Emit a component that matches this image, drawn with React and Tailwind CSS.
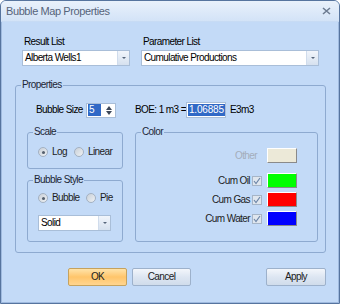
import React from 'react'

const Combo = ({ value, className }) => (
  <div className={`flex h-[16px] bg-white border border-[#a9bed8] ${className}`}>
    <div className="flex-1 flex items-center pl-[2px] text-black whitespace-nowrap overflow-hidden">{value}</div>
    <div className="w-[12px] flex items-center justify-center bg-gradient-to-b from-[#f1f5fb] to-[#d6e1ef] border-l border-[#d0dcec]">
      <span className="block w-0 h-0 border-x-[2px] border-x-transparent border-t-[2px] border-t-[#56657a]" />
    </div>
  </div>
)

const Group = ({ label, className, children }) => (
  <div className={`relative border border-[#8eaad0] rounded-[3px] ${className}`}>
    <span className="absolute left-[5px] -top-[7px] px-[1px] leading-[12px] bg-[#c3daf7] text-[#1c2636]">{label}</span>
    {children}
  </div>
)

const Radio = ({ label, checked, className }) => (
  <div className={`flex items-center h-[12px] ${className}`}>
    <span className="w-[10px] h-[10px] rounded-full border border-[#a3b1c2] bg-gradient-to-br from-[#c9d0d8] to-[#eef1f4] flex items-center justify-center">
      {checked && <span className="block w-[3px] h-[3px] rounded-full bg-[#55606e]" />}
    </span>
    <span className="ml-[4px] text-[#1c1c1c]">{label}</span>
  </div>
)

const Check = () => (
  <span className="w-[10px] h-[10px] border border-[#a6b5c7] bg-[#dfe6ee] flex items-center justify-center">
    <svg width="8" height="8" viewBox="0 0 8 8">
      <path d="M1 4 L3 6.5 L7 1" fill="none" stroke="#6d86a8" strokeWidth="1.2" />
    </svg>
  </span>
)

const Swatch = ({ color }) => (
  <span className={`block w-[30px] h-[15px] border border-t-white border-l-white border-r-[#8a8a8a] border-b-[#8a8a8a] ${color}`} />
)

const ColorRow = ({ label, color, className }) => (
  <div className={`flex items-center ${className}`}>
    <span className="text-[#1c1c1c] mr-[2px]">{label}</span>
    <Check />
    <span className="ml-[5px]"><Swatch color={color} /></span>
  </div>
)

const Btn = ({ children, primary, className }) => (
  <div
    className={`h-[18px] flex items-center justify-center rounded-[2px] border ${
      primary
        ? 'border-[#c5a25e] bg-gradient-to-b from-[#ffe3a8] via-[#ffc56a] to-[#ffd590]'
        : 'border-[#9db1cb] bg-gradient-to-b from-[#f3f6fb] via-[#dde6f2] to-[#d0dceb]'
    } text-[#1c1c1c] ${className}`}
  >
    {children}
  </div>
)

export default function App() {
  return (
    <div className="w-[340px] h-[304px] flex flex-col border border-[#56749e] rounded-t-[6px] overflow-hidden bg-[#c3daf7] font-['Liberation_Sans',Arial,sans-serif] text-[10px] tracking-[-0.6px] leading-[12px]">
      {/* title bar */}
      <div className="h-[21px] flex items-center justify-between pl-[5px] pr-[8px] bg-gradient-to-b from-[#e9f1fb] to-[#d3e3f7] border-b border-[#c7dbf4]">
        <span className="text-[11px] tracking-[-0.4px] text-[#56647a]">Bubble Map Properties</span>
        <svg width="9" height="8" viewBox="0 0 9 8">
          <path d="M1 1 L8 7 M8 1 L1 7" stroke="#6d7c92" strokeWidth="1.6" />
        </svg>
      </div>

      <div className="flex-1 flex flex-col border-x border-b border-[#9fbadf]">
        {/* lists */}
        <div className="flex mt-[14px]">
          <div className="ml-[20px] w-[108px]">
            <div className="h-[12px] pl-[2px] text-black">Result List</div>
            <Combo value="Alberta Wells1" className="mt-[2px]" />
          </div>
          <div className="ml-[11px] w-[178px]">
            <div className="h-[12px] pl-[2px] text-black">Parameter List</div>
            <Combo value="Cumulative Productions" className="mt-[2px]" />
          </div>
        </div>

        {/* properties */}
        <Group label="Properties" className="ml-[13px] mt-[19px] w-[311px] h-[168px]">
          <div className="flex items-center h-[16px] mt-[16px] pl-[20px]">
            <span className="w-[50px] text-black">Bubble Size</span>
            <div className="w-[30px] h-[15px] flex items-center bg-white border border-[#a9bed8]">
              <span className="ml-[1px] w-[13px] h-[12px] bg-[#3169c6] text-white pl-[1px]">5</span>
              <div className="ml-auto mr-[3px] flex flex-col items-center gap-[1px]">
                <span className="block w-0 h-0 border-x-[3px] border-x-transparent border-b-[4px] border-b-[#3b4658]" />
                <span className="block w-0 h-0 border-x-[3px] border-x-transparent border-t-[4px] border-t-[#3b4658]" />
              </div>
            </div>
            <span className="ml-[19px] w-[51px] text-black whitespace-nowrap">BOE: 1 m3 =</span>
            <div className="w-[40px] h-[16px] flex items-center bg-white border border-[#a9bed8]">
              <span className="ml-[1px] bg-[#3169c6] text-white px-[1px] tracking-[-0.2px] whitespace-nowrap">1.06885</span>
            </div>
            <span className="ml-[4px] text-black">E3m3</span>
          </div>

          <div className="flex mt-[14px]">
            <div className="ml-[11px] w-[96px] flex flex-col">
              <Group label="Scale" className="h-[37px]">
                <div className="flex pt-[13px] pl-[10px]">
                  <Radio label="Log" checked className="w-[36px]" />
                  <Radio label="Linear" />
                </div>
              </Group>
              <Group label="Bubble Style" className="h-[62px] mt-[11px]">
                <div className="flex pt-[11px] pl-[10px]">
                  <Radio label="Bubble" checked className="w-[48px]" />
                  <Radio label="Pie" />
                </div>
                <Combo value="Solid" className="ml-[10px] mt-[11px] w-[73px]" />
              </Group>
            </div>

            <Group label="Color" className="ml-[12px] w-[183px] h-[110px]">
              <div className="flex flex-col items-end pr-[20px]">
                <div className="flex items-center mt-[15px]">
                  <span className="text-[#a3adba] mr-[10px]">Other</span>
                  <span className="block w-[30px] h-[15px] bg-[#ece9d8] border border-t-white border-l-white border-r-[#8a8a8a] border-b-[#8a8a8a]" />
                </div>
                <ColorRow label="Cum Oil" color="bg-[#00ff00]" className="mt-[10px]" />
                <ColorRow label="Cum Gas" color="bg-[#ff0000]" className="mt-[4px]" />
                <ColorRow label="Cum Water" color="bg-[#0000ff]" className="mt-[4px]" />
              </div>
            </Group>
          </div>
        </Group>

        {/* buttons */}
        <div className="flex mt-[15px]">
          <Btn primary className="ml-[66px] w-[59px]">OK</Btn>
          <Btn className="ml-[5px] w-[59px]">Cancel</Btn>
          <Btn className="ml-auto mr-[12px] w-[60px]">Apply</Btn>
        </div>
      </div>
    </div>
  )
}
